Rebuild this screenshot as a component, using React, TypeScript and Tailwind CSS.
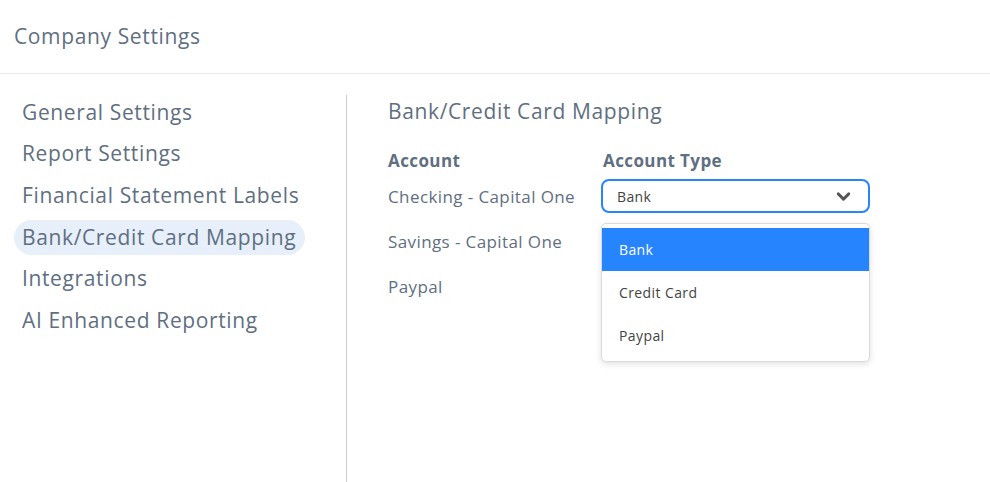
import { ChevronDown } from 'lucide-react';

const sections = [
  'General Settings',
  'Report Settings',
  'Financial Statement Labels',
  'Bank/Credit Card Mapping',
  'Integrations',
  'AI Enhanced Reporting',
];

const accounts = ['Checking - Capital One', 'Savings - Capital One', 'Paypal'];
const types = ['Bank', 'Credit Card', 'Paypal'];

export default function App() {
  const active = 'Bank/Credit Card Mapping';

  return (
    <div className="h-[482px] w-[990px] bg-white font-['Open_Sans',sans-serif] tracking-wide text-[#5f6f82] overflow-hidden">
      <header className="h-[74px] border-b border-[#e6e8eb] flex items-center px-[14px]">
        <h1 className="text-[21px] leading-none tracking-[0.03em]">Company Settings</h1>
      </header>

      <div className="flex">
        {/* menu */}
        <nav className="w-[346px] pl-[14px] pt-[21px] flex flex-col gap-[6.6px]">
          {sections.map((s) => (
            <div
              key={s}
              className={
                'self-start rounded-full pl-[8px] pr-[9px] h-[35px] flex items-center text-[21px] tracking-[0.03em] ' +
                (s === active ? 'bg-[#e7effa]' : '')
              }
            >
              {s}
            </div>
          ))}
        </nav>

        <div className="w-px h-[387px] mt-[21px] bg-[#cccccc]" />

        {/* mapping */}
        <section className="pl-[41px] pt-[23px]">
          <h2 className="text-[21px] leading-[28px] tracking-[0.03em]">Bank/Credit Card Mapping</h2>
          <div className="mt-[23px] flex">
            <div className="w-[213px]">
              <div className="text-[17px] font-bold h-[26px] leading-[26px]">Account</div>
              {accounts.map((a) => (
                <div key={a} className="text-[17px] h-[45px] leading-[20px] pt-[1px] flex items-center">
                  {a}
                </div>
              ))}
            </div>

            <div className="w-[269px] relative">
              <div className="text-[17px] font-bold h-[26px] leading-[26px] ml-[2px]">Account Type</div>
              <div className="mt-[5px] h-[34px] rounded-[8px] border-2 border-[#2684ff] flex items-center justify-between pl-[14px] pr-[14px] text-[14px] text-[#444]">
                <span>Bank</span>
                <ChevronDown size={21} strokeWidth={3.3} className="text-[#555]" />
              </div>

              <div className="absolute left-0 top-[75px] w-[269px] rounded-[5px] border border-[#dadada] bg-white shadow-[0_2px_6px_rgba(0,0,0,0.12)] pt-[4px] pb-[4px]">
                {types.map((t, i) => (
                  <div
                    key={t}
                    className={
                      'h-[43px] flex items-center pl-[17px] text-[14px] ' +
                      (i === 0 ? 'bg-[#2684ff] text-white' : 'text-[#444]')
                    }
                  >
                    {t}
                  </div>
                ))}
              </div>
            </div>
          </div>
        </section>
      </div>
    </div>
  );
}
